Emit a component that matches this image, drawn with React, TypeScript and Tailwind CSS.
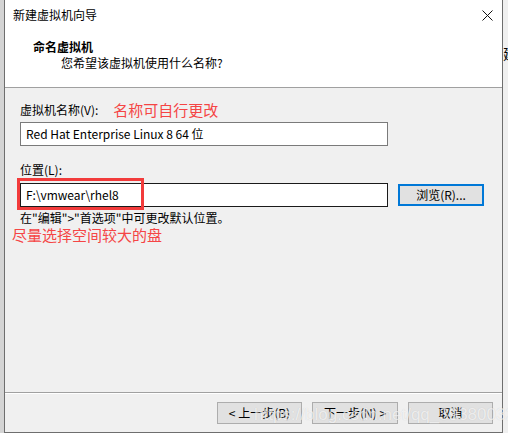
const ui = "font-['Microsoft_YaHei_UI','Noto_Sans_CJK_SC',sans-serif]";

function Button({ label, focused }: { label: string; focused?: boolean }) {
  return (
    <div
      className={
        'flex h-[22px] items-center justify-center bg-[#e1e1e1] text-[12px] leading-none text-black ' +
        (focused ? 'border-2 border-[#0078d7]' : 'border border-[#adadad]')
      }
    >
      {label}
    </div>
  );
}

export default function App() {
  return (
    <div className={`relative flex h-[433px] w-[508px] overflow-hidden bg-[#f0f0f0] ${ui}`}>
      {/* desktop edge on the left */}
      <div className="w-[4px] bg-[#d4d4d4]" />

      {/* dialog window */}
      <div className="flex w-[499px] flex-col border-x border-b border-[#6e6e6e] bg-[#f0f0f0]">
        {/* title bar */}
        <div className="flex h-[30px] items-center justify-between bg-white pl-[8px] pr-[9px]">
          <span className="text-[12px] leading-none text-black">新建虚拟机向导</span>
          <svg width="11" height="11" viewBox="0 0 11 11">
            <path d="M0.5 0.5 L10.5 10.5 M10.5 0.5 L0.5 10.5" stroke="#111" strokeWidth="1" fill="none" />
          </svg>
        </div>

        {/* header */}
        <div className="h-[58px] border-b border-[#a0a0a0] bg-white pt-[9px]">
          <div className="pl-[28px] text-[12px] font-bold leading-[16px] text-black">命名虚拟机</div>
          <div className="pl-[56px] text-[12px] leading-[16px] text-black">您希望该虚拟机使用什么名称?</div>
        </div>

        {/* body */}
        <div className="flex flex-1 flex-col pl-[15px]">
          <div className="mt-[13px] flex h-[18px] items-center">
            <span className="text-[12px] leading-[16px] text-black">虚拟机名称(V):</span>
            <span className="ml-[15px] text-[15px] leading-[18px] text-[#f54545]">名称可自行更改</span>
          </div>
          <div className="mt-[3px] flex h-[24px] w-[368px] items-center border border-[#7a7a7a] bg-white pl-[5px] text-[12px] text-black">
            Red Hat Enterprise Linux 8 64 位
          </div>

          <div className="mt-[16px] text-[12px] leading-[16px] text-black">位置(L):</div>
          <div className="mt-[5px] flex items-center gap-[10px]">
            <div className="relative flex h-[24px] w-[368px] items-center border border-[#1a1a1a] bg-white pl-[5px] text-[12px] text-black">
              F:\vmwear\rhel8
              <div className="absolute left-[-4px] top-[-6px] h-[32px] w-[127px] border-[3px] border-[#f23b3b]" />
            </div>
            <div className="w-[86px]">
              <Button label="浏览(R)..." focused />
            </div>
          </div>

          <div className="mt-[3px] text-[12px] leading-[16px] text-black">{'在"编辑">"首选项"中可更改默认位置。'}</div>
          <div className="-ml-[8px] text-[15px] leading-[18px] text-[#f54545]">尽量选择空间较大的盘</div>
        </div>

        {/* footer */}
        <div className="border-t border-[#a0a0a0]">
          <div className="flex justify-end gap-[10px] border-t border-white pb-[8px] pr-[9px] pt-[8px]">
            <div className="w-[85px]">
              <Button label="< 上一步(B)" />
            </div>
            <div className="w-[86px]">
              <Button label="下一步(N) >" />
            </div>
            <div className="w-[85px]">
              <Button label="取消" />
            </div>
          </div>
        </div>
      </div>

      {/* neighbouring window peeking in on the right */}
      <div className="w-[5px] overflow-hidden bg-[#f0f0f0] pt-[40px]">
        <span className="text-[14px] leading-none text-black">建</span>
      </div>

      {/* blog watermark */}
      <div className="pointer-events-none absolute left-[254px] top-[402px] font-['Liberation_Sans',sans-serif] text-[17px] text-white/70 [text-shadow:0_0_1px_rgba(0,0,0,0.15)]">
        https://blog.csdn.net/qq_39380032
      </div>
    </div>
  );
}
